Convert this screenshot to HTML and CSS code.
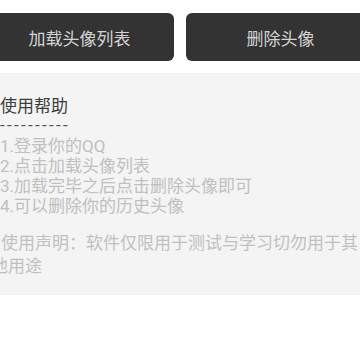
FILE: index.html
```html
<!DOCTYPE html>
<html lang="zh">
<head>
<meta charset="utf-8">
<link rel="stylesheet" href="styles.css">
</head>
<body>
<div class="actions">
  <button class="btn">加载头像列表</button>
  <button class="btn">删除头像</button>
</div>
<div class="panel">
  <div class="title">使用帮助</div>
  <div class="dashes">----------</div>
  <div class="steps">
    <div class="step">1.登录你的QQ</div>
    <div class="step">2.点击加载头像列表</div>
    <div class="step">3.加载完毕之后点击删除头像即可</div>
    <div class="step">4.可以删除你的历史头像</div>
  </div>
  <p class="notice">使用声明：软件仅限用于测试与学习切勿用于其他用途</p>
</div>
</body>
</html>
```
FILE: styles.css
```css
html, body {
  margin: 0;
  padding: 0;
  background: #ffffff;
  overflow: hidden;
  font-family: "Roboto", "Noto Sans CJK SC", sans-serif;
}
.actions {
  display: flex;
  gap: 12px;
  width: 390px;
  margin-left: -15px;
  padding-top: 13px;
}
.btn {
  flex: 1;
  height: 48px;
  border: none;
  border-radius: 6px;
  background: #333333;
  color: #d4d4d4;
  font-family: "Roboto", "Noto Sans CJK SC", sans-serif;
  font-size: 17px;
  padding: 0;
}
.panel {
  margin-top: 12px;
  background: #f4f4f4;
  padding: 23px 0 17px 0;
  width: 360px;
}
.title {
  font-size: 17px;
  line-height: 20px;
  color: #3c3c3c;
}
.dashes {
  font-size: 17px;
  line-height: 19px;
  color: #555555;
  letter-spacing: 2.3px;
}
.steps {
  padding-top: 1px;
}
.step {
  font-size: 17px;
  line-height: 20px;
  color: #c0c0c0;
  white-space: nowrap;
}
.notice {
  margin: 16px 0 0 -9px;
  width: 372px;
  text-indent: 10px;
  font-size: 17px;
  line-height: 23px;
  color: #c0c0c0;
}
```
